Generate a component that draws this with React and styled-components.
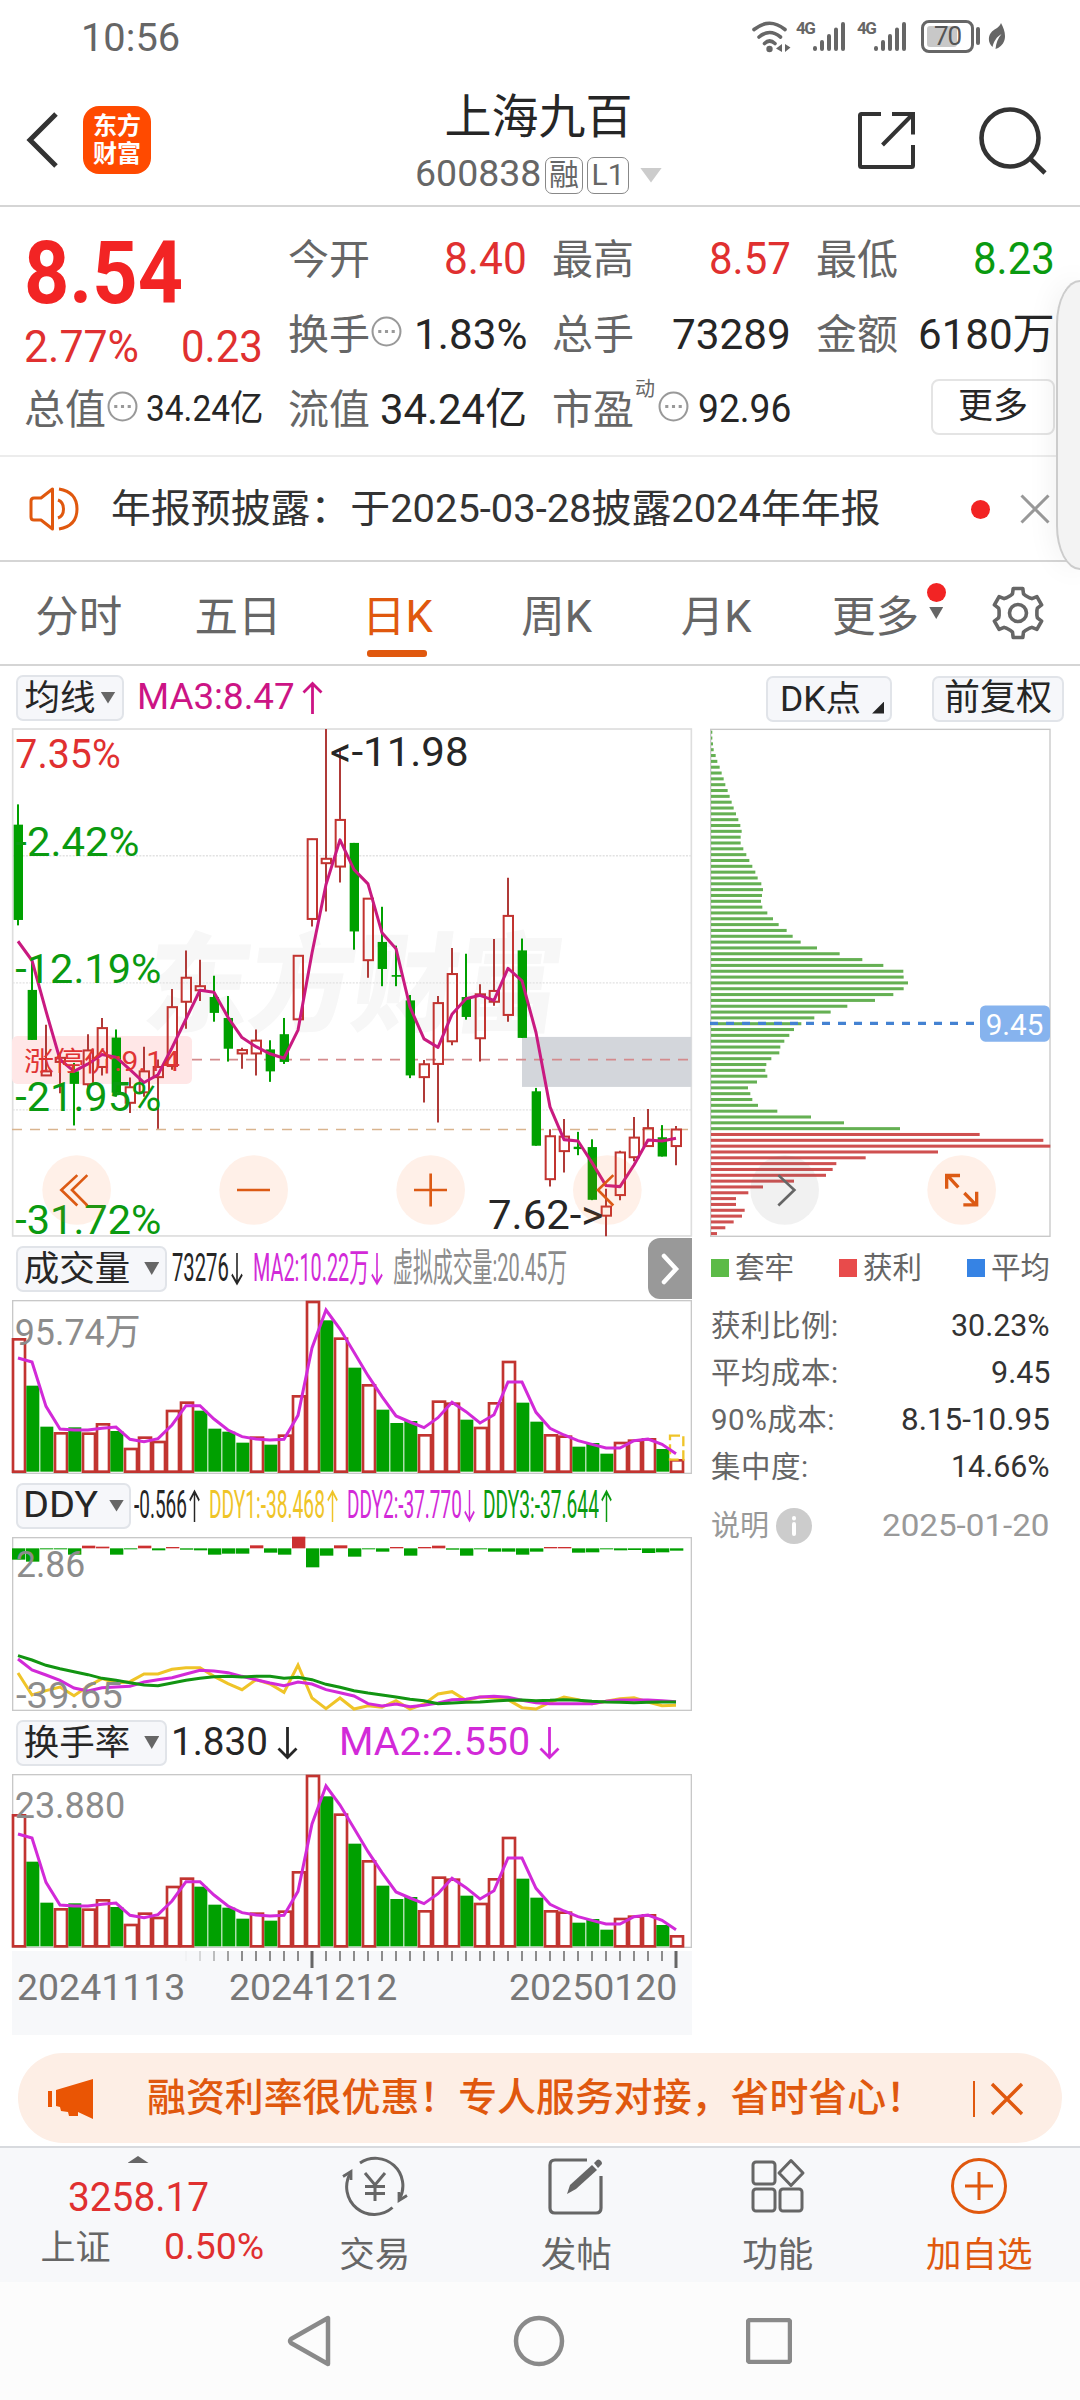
import { useLayoutEffect, useRef, useState } from 'react';
import styled, { createGlobalStyle } from 'styled-components';

const colors = {
  up: '#e03030',
  upStroke: '#c23430',
  down: '#00a000',
  downText: '#0a9a10',
  orange: '#e0580e',
  ma: '#cc1485',
  purple: '#d22ad8',
  yellow: '#efc428',
  text: '#262626',
  gray: '#666666',
  light: '#8c8c8c',
  line: '#d5d5d5',
};

const font = 'Roboto, "Noto Sans CJK SC", sans-serif';

const GlobalStyle = createGlobalStyle`
  * { box-sizing: border-box; }
  body { margin: 0; background: #fff; }
  svg { display: block; }
`;

/* ---------- data ---------- */

// [high, bodyTop, bodyBottom, low, rising]
const candles = [
  [250, 310, 592, 608, 0], [712, 799, 947, 947, 0], [902, 1040, 1052, 1052, 1], [985, 1000, 1012, 1105, 1],
  [1015, 1040, 1077, 1200, 0], [930, 978, 1078, 1103, 1], [882, 912, 1027, 1052, 1], [916, 940, 1103, 1115, 0],
  [1058, 1087, 1133, 1163, 1], [967, 1040, 1102, 1115, 1], [1005, 1027, 1057, 1210, 1], [796, 850, 1024, 1035, 1],
  [682, 763, 834, 914, 1], [710, 788, 800, 832, 1], [757, 820, 867, 893, 0], [817, 882, 973, 1011, 0],
  [970, 977, 987, 1032, 1], [916, 949, 987, 1052, 1], [948, 975, 1040, 1071, 0], [882, 930, 1012, 1018, 0],
  [697, 698, 886, 886, 1], [352, 353, 589, 611, 1], [27, 411, 424, 567, 1], [85, 296, 434, 481, 1],
  [364, 364, 626, 680, 0], [528, 529, 711, 763, 1], [553, 657, 737, 788, 0], [668, 755, 760, 788, 0],
  [814, 830, 1052, 1060, 0], [1006, 1019, 1057, 1132, 1], [817, 838, 1018, 1191, 1], [675, 752, 951, 963, 1],
  [692, 820, 879, 887, 0], [782, 812, 942, 1011, 1], [648, 802, 834, 846, 1], [467, 580, 873, 893, 1],
  [647, 682, 941, 941, 0], [1089, 1099, 1260, 1260, 0], [1211, 1232, 1359, 1381, 1], [1181, 1233, 1276, 1339, 1],
  [1219, 1263, 1270, 1288, 0], [1241, 1264, 1420, 1421, 0], [1387, 1440, 1467, 1528, 1], [1275, 1280, 1406, 1421, 1],
  [1175, 1236, 1294, 1306, 1], [1151, 1208, 1261, 1261, 1], [1199, 1235, 1292, 1292, 0], [1202, 1212, 1261, 1318, 1],
];

const ma3 = [
  655, 712, 862, 1005, 1040, 1018, 990, 998, 1035, 1073, 1050, 970, 885, 800, 806, 880, 940, 967, 988, 1001, 918, 690, 487, 355,
  443, 485, 630, 677, 850, 944, 969, 871, 825, 815, 830, 735, 772, 925, 1145, 1242, 1246, 1310, 1378, 1381, 1317, 1243, 1246, 1238,
];

const volume = [
  [114, 1], [257, 0], [380, 0], [396, 1], [382, 0], [397, 1], [369, 1], [393, 0], [443, 1], [409, 1], [422, 1], [329, 1],
  [304, 1], [332, 0], [386, 0], [395, 0], [428, 0], [409, 1], [434, 0], [403, 1], [285, 1], [2, 1], [61, 0], [112, 1],
  [203, 0], [252, 1], [329, 0], [369, 0], [363, 0], [402, 1], [301, 1], [307, 1], [359, 0], [380, 1], [306, 1], [182, 1],
  [308, 0], [365, 0], [402, 1], [406, 1], [440, 0], [429, 0], [461, 0], [425, 1], [418, 1], [414, 1], [447, 0], [477, 1],
];

const volumeMa = [
  174, 186, 319, 387, 390, 390, 385, 381, 418, 425, 416, 375, 317, 317, 357, 390, 410, 417, 420, 418, 346, 144, 30, 87,
  157, 227, 290, 348, 366, 383, 353, 307, 335, 369, 344, 246, 246, 337, 385, 405, 422, 433, 444, 444, 422, 417, 433, 461,
];

const ddyBars = [
  34, 40, 3, 3, 19, -8, -5, 19, 3, -8, 6, -4, 4, 6, 19, 16, 16, -9, 13, 19, -35, 57, 22, -9,
  25, 3, 10, -4, 22, -4, -8, 4, 22, 3, 10, 10, 19, 10, -4, -4, 13, 12, 3, 6, 5, 14, 12, 7,
];

const ddy1 = [
  408, 474, 461, 450, 476, 448, 425, 438, 434, 411, 411, 397, 392, 392, 418, 440, 458, 428, 441, 466, 384, 483, 515, 483,
  516, 506, 511, 491, 516, 501, 471, 464, 490, 480, 482, 488, 512, 516, 496, 480, 488, 500, 493, 485, 482, 495, 506, 505,
];
const ddy2 = [
  366, 399, 414, 430, 453, 462, 452, 450, 448, 435, 428, 422, 411, 400, 402, 407, 418, 428, 438, 446, 435, 441, 458, 467,
  477, 500, 507, 501, 509, 505, 498, 488, 487, 480, 478, 481, 490, 497, 500, 500, 500, 500, 493, 489, 489, 489, 491, 494,
];
const ddy3 = [
  356, 369, 385, 395, 404, 413, 424, 430, 437, 444, 446, 438, 430, 424, 419, 418, 420, 418, 418, 424, 421, 428, 442, 451,
  461, 468, 474, 480, 487, 491, 500, 498, 496, 495, 492, 490, 489, 491, 490, 488, 490, 493, 495, 496, 497, 496, 495, 495,
];

const chips = [
  4, 4, 6, 8, 14, 19, 26, 32, 38, 43, 50, 56, 62, 68, 75, 82, 88, 92, 89, 89, 97, 106, 115, 124, 133, 140, 151, 156, 153,
  150, 154, 169, 186, 203, 227, 245, 269, 318, 386, 454, 517, 577, 578, 591, 578, 547, 492, 409, 359, 310, 271, 249, 235,
  220, 208, 205, 181, 166, 163, 169, 138, 111, 118, 124, 141, 199, 300, 399, 567, 806, 997, 1018, 681, 464, 376, 365, 345,
  249, 156, 112, 75, 75, 101, 93, 68, 43, 18,
];
const firstProfitChip = 69;

const toPoints = (values, x0) => values.map((v, i) => `${x0 + i * 42},${v}`).join(' ');

/* ---------- shared ---------- */

// Squeezes or stretches one line of text to the given width
function FitText({ width, size, color, weight, children }) {
  const ref = useRef(null);
  const [scale, setScale] = useState(1);

  useLayoutEffect(() => {
    setScale(width / ref.current.offsetWidth);
  }, [width, size, children]);

  return (
    <FitBox $width={width} $size={size} $color={color} $weight={weight}>
      <FitInner ref={ref} style={{ transform: `scaleX(${scale})` }}>{children}</FitInner>
    </FitBox>
  );
}

const FitBox = styled.span`
  display: block;
  flex: none;
  width: ${props => props.$width}px;
  font-size: ${props => props.$size}px;
  font-weight: ${props => props.$weight || 400};
  color: ${props => props.$color || colors.text};
  line-height: 1.2;
  white-space: nowrap;
`;

const FitInner = styled.span`
  display: inline-block;
  transform-origin: 0 50%;
`;

const Space = styled.span`
  flex: none;
  width: ${props => props.$w}px;
`;

const Triangle = styled.span`
  flex: none;
  width: ${props => props.$w}px;
  height: ${props => props.$h}px;
  background: ${props => props.$color || colors.gray};
  clip-path: ${props => (props.$up ? 'polygon(50% 0, 100% 100%, 0 100%)' : 'polygon(0 0, 100% 0, 50% 100%)')};
`;

/* ---------- status bar and header ---------- */

function Signal() {
  return (
    <SignalGroup>
      <NetLabel>4G</NetLabel>
      <svg width="34" height="32" viewBox="0 0 34 32" stroke="#666" strokeWidth="4" strokeLinecap="round">
        <path d="M3 28v1M10 22v7M17 16v13M24 9.500v19.500M31 4v25" />
      </svg>
    </SignalGroup>
  );
}

function StatusBar() {
  return (
    <Status>
      <FitText width={99} size={39} color="#666">10:56</FitText>
      <StatusIcons>
        <svg width="40" height="34" viewBox="0 0 40 34" fill="none" stroke="#666" strokeWidth="3.600" strokeLinecap="round">
          <path d="M3 10.500Q18.500 -2 34 10.500M8 18Q18.500 9 29.500 18M13.500 24.500Q18.500 19.500 24 24.500" />
          <circle cx="18.500" cy="30" r="3.200" fill="#666" stroke="none" />
          <path d="M31 25v8l-6-3.500zM34 25v8l5.500-4.500z" fill="#666" stroke="none" />
        </svg>
        <Space $w={5} />
        <Signal />
        <Space $w={11} />
        <Signal />
        <Space $w={14} />
        <Battery><BatteryLevel>70</BatteryLevel></Battery>
        <BatteryTip />
        <svg width="18" height="28" viewBox="0 0 18 28" fill="#666">
          <path d="M13 1c3 6 5 11 3.500 17C15 23 11 26 7.500 27c.500-6 2.500-11 6-15C8.500 15 6 19 4.500 25 0 21-.500 14 4 9.500 7.500 6.500 11 6 13 1z" />
        </svg>
      </StatusIcons>
    </Status>
  );
}

function Header() {
  return (
    <HeaderBar>
      <svg width="34" height="58" viewBox="0 0 34 58" fill="none" stroke="#333" strokeWidth="5">
        <path d="M31 3L5 29l26 26" />
      </svg>
      <Logo><span>东方</span><span>财富</span></Logo>
      <TitleBlock>
        <Title>上海九百</Title>
        <CodeRow>
          <FitText width={126} size={36} color="#666">600838</FitText>
          <Space $w={4} />
          <Badge $w={38}>融</Badge>
          <Space $w={4} />
          <Badge $w={42}>L1</Badge>
          <Space $w={11} />
          <Triangle $w={22} $h={15} $color="#ccc" />
        </CodeRow>
      </TitleBlock>
      <svg width="60" height="60" viewBox="0 0 60 60" fill="none" stroke="#333" strokeWidth="4">
        <path d="M25 4H5.500Q4 4 4 5.500V55.500Q4 57 5.500 57H55.500Q57 57 57 55.500V35M36 4H57V24.500M56 5L26.500 35" />
      </svg>
      <Space $w={61} />
      <svg width="72" height="72" viewBox="0 0 72 72" fill="none" stroke="#333" strokeWidth="4.600">
        <circle cx="33" cy="34" r="28.500" />
        <path d="M53 54.500L68 69" />
      </svg>
    </HeaderBar>
  );
}

const Status = styled.div`
  height: 92px;
  padding: 14px 74px 0 81px;
  display: flex;
  justify-content: space-between;
  align-items: flex-start;

  & > ${FitBox} {
    margin-top: 1px;
  }
`;

const StatusIcons = styled.div`
  display: flex;
  align-items: center;
  height: 44px;
`;

const SignalGroup = styled.div`
  display: flex;
  align-items: flex-start;
`;

const NetLabel = styled.span`
  width: 16px;
  font-size: 17px;
  line-height: 16px;
  font-weight: 700;
  letter-spacing: -1.5px;
  color: #666;
  white-space: nowrap;
`;

const Battery = styled.div`
  width: 53px;
  height: 33px;
  border: 3px solid #666;
  border-radius: 8px;
  padding: 3px;
`;

const BatteryLevel = styled.div`
  width: 30px;
  height: 21px;
  padding-left: 7px;
  background: #c8c8c8;
  border-radius: 3px;
  font-size: 26px;
  line-height: 21px;
  letter-spacing: -1px;
  color: #555;
  white-space: nowrap;
`;

const BatteryTip = styled.div`
  width: 4px;
  height: 18px;
  margin: 0 8px 0 2px;
  border-radius: 2px;
  background: #666;
`;

const HeaderBar = styled.div`
  height: 115px;
  display: flex;
  align-items: center;
  padding: 2px 31px 20px 25px;
  border-bottom: 2px solid ${colors.line};
`;

const Logo = styled.div`
  width: 68px;
  height: 68px;
  margin-left: 24px;
  display: flex;
  flex-direction: column;
  justify-content: center;
  align-items: center;
  border-radius: 16px;
  background: #ff4a00;
  color: #fff;
  font-size: 24px;
  font-weight: 700;
  line-height: 28px;
`;

const TitleBlock = styled.div`
  flex: 1;
  padding-top: 7px;
  display: flex;
  flex-direction: column;
  align-items: center;
`;

const Title = styled.div`
  margin-right: -70px;
  font-size: 47px;
  line-height: 56px;
  color: ${colors.text};
`;

const CodeRow = styled.div`
  display: flex;
  align-items: center;
  height: 44px;
  margin: 8px -70px 0 0;
`;

const Badge = styled.span`
  width: ${props => props.$w}px;
  height: 37px;
  border: 1.5px solid #888;
  border-radius: 7px;
  font-size: 30px;
  line-height: 34px;
  text-align: center;
  color: #666;
`;

/* ---------- quote ---------- */

function Dots() {
  return (
    <DotsSvg width="31" height="31" viewBox="0 0 30 30" fill="none" stroke="#999" strokeWidth="2">
      <circle cx="15" cy="15" r="13.500" />
      <path d="M7 15h3M13.500 15h3M20 15h3" strokeWidth="3" />
    </DotsSvg>
  );
}

function QuotePanel() {
  return (
    <Quote>
      <PriceCell>
        <Price><FitText width={159} size={88} color="#f22424" weight={700}>8.54</FitText></Price>
        <Change>
          <FitText width={115} size={44} color={colors.up}>2.77%</FitText>
          <FitText width={82} size={44} color={colors.up}>0.23</FitText>
        </Change>
      </PriceCell>
      <Cell><Label>今开</Label><FitText width={83} size={44} color={colors.up}>8.40</FitText></Cell>
      <Cell><Label>最高</Label><FitText width={82} size={44} color={colors.up}>8.57</FitText></Cell>
      <Cell><Label>最低</Label><FitText width={82} size={44} color={colors.downText}>8.23</FitText></Cell>
      <Cell><Label>换手</Label><Dots /><FitText width={113} size={43}>1.83%</FitText></Cell>
      <Cell><Label>总手</Label><FitText width={119} size={43}>73289</FitText></Cell>
      <Cell><Label>金额</Label><FitText width={137} size={43}>6180万</FitText></Cell>
      <Cell><Label>总值</Label><Dots /><FitText width={117} size={36}>34.24亿</FitText></Cell>
      <Cell><Label>流值</Label><FitText width={147} size={43}>34.24亿</FitText></Cell>
      <Cell><Label>市盈</Label><Super>动</Super><Dots /><FitText width={93} size={38}>92.96</FitText></Cell>
      <Cell><span /><MoreButton>更多</MoreButton></Cell>
      <SideHandle />
    </Quote>
  );
}

const DotsSvg = styled.svg`
  flex: none;
  margin: 0 auto 6px 1px;
`;

const Quote = styled.div`
  position: relative;
  display: grid;
  grid-template-columns: 239px 239px 239px 239px;
  grid-template-rows: 75px 75px 75px;
  column-gap: 25px;
  height: 250px;
  padding: 15px 0 0 24px;
  border-bottom: 2px solid #ececec;
`;

const PriceCell = styled.div`
  grid-row: span 2;
`;

const Price = styled.div`
  height: 101px;
  display: flex;
  align-items: center;
`;

const Change = styled.div`
  height: 49px;
  display: flex;
  justify-content: space-between;
  align-items: center;
`;

const Cell = styled.div`
  display: flex;
  justify-content: space-between;
  align-items: center;
`;

const Label = styled.span`
  font-size: 41px;
  line-height: 50px;
  color: ${colors.gray};
  white-space: nowrap;
`;

const Super = styled.span`
  align-self: flex-start;
  margin: 5px 2px 0 1px;
  font-size: 20px;
  line-height: 24px;
  color: ${colors.gray};
`;

const MoreButton = styled.button`
  width: 124px;
  height: 56px;
  margin-bottom: 6px;
  padding: 0;
  background: #fff;
  border: 2px solid #e4e4e4;
  border-radius: 8px;
  font: 35px/50px ${font};
  color: ${colors.text};
`;

// Edge handle of the floating drawer
const SideHandle = styled.div`
  position: absolute;
  left: 1056px;
  top: 73px;
  width: 24px;
  height: 290px;
  background: #f3f3f3;
  border: 2px solid #ccc;
  border-right: none;
  border-radius: 24px 0 0 24px / 44px 0 0 44px;
  box-shadow: 0 0 30px rgba(0, 0, 0, 0.08);
  z-index: 2;
`;

/* ---------- notice and tabs ---------- */

function Notice() {
  return (
    <NoticeBar>
      <svg width="52" height="46" viewBox="0 0 52 46" fill="none" stroke={colors.orange} strokeWidth="3">
        <path d="M23.500 3v40L12 34H5q-3 0-3-3V15q0-3 3-3h7z" strokeLinejoin="round" />
        <path d="M29 14q5.500 2 5.500 9t-5.500 9M30 3q18 3 18 20T30 43" />
      </svg>
      <Space $w={30} />
      <FitText width={770} size={39} color="#333">年报预披露：于2025-03-28披露2024年年报</FitText>
      <RedDot $left={90} />
      <Space $w={30} />
      <svg width="30" height="30" viewBox="0 0 30 30" stroke="#999" strokeWidth="3">
        <path d="M1.500 1.500l27 27M28.500 1.500l-27 27" />
      </svg>
    </NoticeBar>
  );
}

const gearPath = Array.from({ length: 6 }, (_, k) => {
  const at = (r, deg) => {
    const a = ((deg + k * 60 - 90) * Math.PI) / 180;
    return `${(27 + r * Math.cos(a)).toFixed(1)} ${(27 + r * Math.sin(a)).toFixed(1)}`;
  };
  return `${k ? 'L' : 'M'}${at(19, -23)}L${at(20, -16)}L${at(25, -11)}L${at(25, 11)}L${at(20, 16)}L${at(19, 23)}`;
}).join('') + 'Z';

function Tabs() {
  const tabs = ['分时', '五日', '日K', '周K', '月K'];
  return (
    <TabBar>
      {tabs.map(tab => (
        <Tab key={tab} $active={tab === '日K'}>{tab}</Tab>
      ))}
      <Tab>
        更多
        <MoreMark><RedDot /><Triangle $w={14} $h={12} /></MoreMark>
      </Tab>
      <GearCell>
        <svg width="54" height="54" viewBox="0 0 54 54" fill="none" stroke="#666" strokeWidth="3.600" strokeLinejoin="round">
          <path d={gearPath} />
          <circle cx="27" cy="27" r="8.500" />
        </svg>
      </GearCell>
    </TabBar>
  );
}

const NoticeBar = styled.div`
  height: 105px;
  display: flex;
  align-items: center;
  padding: 1px 0 0 29px;
  border-bottom: 2px solid ${colors.line};
`;

const RedDot = styled.span`
  flex: none;
  width: 19px;
  height: 19px;
  margin-left: ${props => props.$left || 0}px;
  border-radius: 50%;
  background: #f22424;
`;

const TabBar = styled.div`
  display: flex;
  height: 104px;
  padding-bottom: 1px;
  border-bottom: 2px solid ${colors.line};
`;

const Tab = styled.div`
  position: relative;
  width: 159.4px;
  display: flex;
  justify-content: center;
  align-items: center;
  padding: 2px 2px 0 0;
  font-size: 43.5px;
  color: ${props => (props.$active ? colors.orange : colors.gray)};

  &::after {
    content: '';
    display: ${props => (props.$active ? 'block' : 'none')};
    position: absolute;
    left: 50%;
    bottom: 6px;
    width: 60px;
    height: 7px;
    margin-left: -31px;
    border-radius: 3px;
    background: ${colors.orange};
  }
`;

const MoreMark = styled.span`
  position: absolute;
  left: 130px;
  top: 21px;
  display: flex;
  flex-direction: column;
  align-items: center;
  gap: 5px;
`;

const GearCell = styled.div`
  width: 124px;
  display: flex;
  justify-content: center;
  align-items: center;
`;

/* ---------- charts ---------- */

function RoundButton({ x, gray, children }) {
  return (
    <g transform={`translate(${x} 1391)`} fill="none" stroke={gray ? '#666' : '#dc5a14'} strokeWidth="8">
      <circle r="103" fill={gray ? 'rgba(120,120,120,0.1)' : 'rgba(255,110,30,0.1)'} stroke="none" />
      {children}
    </g>
  );
}

function ChartLabel({ x, y, length, color, size = 118, children }) {
  return (
    <text x={x} y={y} textLength={length} lengthAdjust="spacingAndGlyphs" fontSize={size} fill={color}>
      {children}
    </text>
  );
}

function CandleChart() {
  return (
    <PriceSvg $w={680} viewBox="36 24 2040 1512" preserveAspectRatio="none" fontFamily={font}>
      <text x="440" y="898" fontSize="318" fontWeight="900" fill="#f7f7f7" textLength="1250" transform="skewX(-8) translate(108 0)">
        东方财富
      </text>
      <rect x="38" y="27" width="2036" height="1500" fill="none" stroke="#dedede" strokeWidth="5" />
      {[402, 778, 1154].map(y => (
        <path key={y} d={`M38 ${y}H2074`} stroke="#e2e2e2" strokeWidth="4" strokeDasharray="6 4" />
      ))}
      <rect x="1566" y="938" width="508" height="148" fill="#d3d6db" />
      <rect x="36" y="935" width="540" height="142" rx="16" fill="#ffe7e7" />
      <path d="M576 1005H2074" stroke="#d48a8c" strokeWidth="5" strokeDasharray="30 24" />
      <path d="M36 1212H2074" stroke="#d9b48e" strokeWidth="5" strokeDasharray="30 24" />

      {candles.map(([high, top, bottom, low, rising], i) => {
        const x = 54 + i * 42;
        return rising ? (
          <g key={i} stroke={colors.upStroke} strokeWidth="6" fill="none">
            <path d={`M${x} ${high}V${top}M${x} ${bottom}V${low}`} stroke="#b03a38" />
            <rect x={x - 13} y={top} width="28" height={bottom - top} />
          </g>
        ) : (
          <g key={i} fill={colors.down}>
            <rect x={x - 3} y={high} width="6" height={low - high} />
            <rect x={x - 13} y={top} width="28" height={bottom - top} />
          </g>
        );
      })}
      <polyline points={toPoints(ma3, 54)} fill="none" stroke="#c91a80" strokeWidth="9" strokeLinejoin="round" />

      <ChartLabel x={72} y={1038} length={468} size={82} color="#e03434">涨停价:9.14</ChartLabel>
      <ChartLabel x={46} y={143} length={316} color={colors.up}>7.35%</ChartLabel>
      <ChartLabel x={46} y={404} length={372} color={colors.downText}>-2.42%</ChartLabel>
      <ChartLabel x={46} y={780} length={438} color={colors.downText}>-12.19%</ChartLabel>
      <ChartLabel x={46} y={1157} length={438} color={colors.downText}>-21.95%</ChartLabel>
      <ChartLabel x={46} y={1521} length={438} color={colors.downText}>-31.72%</ChartLabel>
      <ChartLabel x={990} y={136} length={416} color={colors.text}>&lt;-11.98</ChartLabel>
      <ChartLabel x={1464} y={1505} length={346} color={colors.text}>7.62-&gt;</ChartLabel>

      <RoundButton x={230}><path d="M2 -44L-46 0L2 46M32 -44L-14 0L32 46" /></RoundButton>
      <RoundButton x={761}><path d="M-50 0H49" /></RoundButton>
      <RoundButton x={1292}><path d="M-50 0H49M0 -49V49" /></RoundButton>
      <RoundButton x={1822}><path d="M18 -44L-28 0L18 46" /></RoundButton>
    </PriceSvg>
  );
}

function ChipChart() {
  return (
    <PriceSvg $w={341} viewBox="60 24 1023 1512" preserveAspectRatio="none" fontFamily={font}>
      <rect x="62" y="28" width="1018" height="1500" fill="none" stroke="#c8c8c8" strokeWidth="4" />
      {chips.map((w, i) => (
        <rect
          key={i}
          x="63"
          y={32 + i * 17.25}
          width={w}
          height="9"
          fill={i < firstProfitChip ? '#65b053' : '#cf5050'}
        />
      ))}
      <path d="M60 898H852" stroke="#4482d2" strokeWidth="9" strokeDasharray="24 24" />
      <rect x="870" y="845" width="210" height="107" rx="16" fill="#86b3ee" />
      <ChartLabel x={887} y={932} length={173} size={88} color="#fff">9.45</ChartLabel>
      <RoundButton x={284} gray><path d="M-19 -44L29 0L-19 46" /></RoundButton>
      <RoundButton x={815}>
        <path d="M-5 -43H-45V-4M-43 -43L-10 -8M5 44H45V5M43 44L8 9" strokeWidth="10" />
      </RoundButton>
    </PriceSvg>
  );
}

function BarPanel({ offset, label, labelLength, virtual }) {
  const floor = offset ? 517 : 515;
  return (
    <PanelSvg viewBox="0 0 2040 522" fontFamily={font}>
      <rect x="2" y="2" width="2036" height="518" fill="none" stroke="#c8c8c8" strokeWidth="4" />
      {volume.map(([top, rising], i) => {
        const y = top + (i === 21 ? 0 : offset);
        return rising ? (
          <rect key={i} x={i * 42 + 3} y={y + 4} width="36" height={floor - y - 4} fill="#fff" stroke={colors.upStroke} strokeWidth="8" />
        ) : (
          <rect key={i} x={i * 42 + 1} y={y} width="39" height={floor - y} fill={colors.down} />
        );
      })}
      {virtual && (
        <rect x="1974" y="407" width="40" height="72" fill="none" stroke={colors.yellow} strokeWidth="7" strokeDasharray="30 12" />
      )}
      <polyline points={toPoints(volumeMa.map(v => v + offset), 18)} fill="none" stroke={colors.purple} strokeWidth="9" />
      <ChartLabel x={8} y={offset ? 133 : 134} length={labelLength} size={112} color={colors.light}>{label}</ChartLabel>
    </PanelSvg>
  );
}

function DdyPanel() {
  return (
    <PanelSvg viewBox="0 0 2040 522" fontFamily={font}>
      <rect x="2" y="2" width="2036" height="518" fill="none" stroke="#c8c8c8" strokeWidth="4" />
      {ddyBars.map((h, i) => (
        <rect key={i} x={i * 42} y={Math.min(34, 34 + h)} width="40" height={Math.abs(h)} fill={h > 0 ? colors.down : '#cc3030'} />
      ))}
      <ChartLabel x={12} y={119} length={208} size={112} color={colors.light}>2.86</ChartLabel>
      <g fill="none" strokeWidth="9">
        <polyline points={toPoints(ddy1, 18)} stroke={colors.yellow} />
        <polyline points={toPoints(ddy2, 18)} stroke={colors.purple} />
        <polyline points={toPoints(ddy3, 18)} stroke="#129412" />
      </g>
      <ChartLabel x={12} y={514} length={320} size={112} color={colors.light}>-39.65</ChartLabel>
    </PanelSvg>
  );
}

function DateAxis() {
  return (
    <Axis>
      <svg width="680" height="18" viewBox="0 0 680 18">
        {Array.from({ length: 36 }, (_, k) => {
          const i = k + 12;
          const major = i === 21 || i === 47;
          return (
            <rect
              key={i}
              x={6 + i * 14 - (major ? 1.5 : 1)}
              y="0"
              width={major ? 3 : 2}
              height={major ? 17 : 10}
              fill={major ? '#666' : '#8c8c8c'}
              opacity={Math.min(1, (k + 0.2) / 4)}
            />
          );
        })}
      </svg>
      <Dates>
        <FitText width={168} size={37} color="#777">20241113</FitText>
        <Space $w={44} />
        <FitText width={168} size={37} color="#777">20241212</FitText>
        <Space $w={112} />
        <FitText width={168} size={37} color="#777">20250120</FitText>
      </Dates>
    </Axis>
  );
}

function Toolbar() {
  return (
    <Tools>
      <Chip $w={108}>均线<Triangle $w={15} $h={12} /></Chip>
      <Space $w={13} />
      <FitText width={158} size={37} color={colors.ma}>MA3:8.47</FitText>
      <Arrow color={colors.ma} left={7} />
      <ToolButtons>
        <Chip $w={126}>DK点<Corner /></Chip>
        <Chip $w={132}><FitText width={108} size={36}>前复权</FitText></Chip>
      </ToolButtons>
    </Tools>
  );
}

function Arrow({ color, down, w = 21, left = 2 }) {
  return (
    <ArrowSvg $left={left} width={w} height="34" viewBox="0 0 21 34" preserveAspectRatio="none" fill="none" stroke={color} strokeWidth="2.800">
      <path d={down ? 'M10.500 1v31M1.500 22.500l9 9 9-9' : 'M10.500 33V2M1.500 11.500l9-9 9 9'} />
    </ArrowSvg>
  );
}

function Indicator({ width, size = 39, color, down, arrow, children }) {
  return (
    <>
      <FitText width={width} size={size} color={color}>{children}</FitText>
      {arrow && <Arrow color={color} down={down} w={arrow} left={arrow > 15 ? 9 : 2} />}
    </>
  );
}

const costRows = [
  ['获利比例:', '30.23%', 99],
  ['平均成本:', '9.45', 59],
  ['90%成本:', '8.15-10.95', 149],
  ['集中度:', '14.66%', 99],
];

function CostPanel() {
  return (
    <CostColumn>
      <ChipChart />
      <Legend>
        <LegendItem $color="#5cbb47">套牢</LegendItem>
        <LegendItem $color="#e84b4b">获利</LegendItem>
        <LegendItem $color="#3683e4">平均</LegendItem>
      </Legend>
      {costRows.map(([label, value, width]) => (
        <CostRow key={label}>
          <CostLabel>{label}</CostLabel>
          <FitText width={width} size={31} color="#333">{value}</FitText>
        </CostRow>
      ))}
      <NoteRow>
        <span>说明</span>
        <InfoMark>
          <svg width="36" height="36" viewBox="0 0 36 36" fill="none" stroke="#fff" strokeWidth="4" strokeLinecap="round">
            <path d="M18 16v10M18 10v.500" />
          </svg>
        </InfoMark>
        <FitText width={168} size={31} color="#999">2025-01-20</FitText>
      </NoteRow>
    </CostColumn>
  );
}

function Charts() {
  return (
    <ChartArea>
      <ChartColumn>
        <CandleChart />
        <PanelHead $h={61} $bottom={2}>
          <Chip $w={151}>成交量<Space $w={4} /><Triangle $w={15} $h={13} /></Chip>
          <Space $w={5} />
          <Indicator width={57} color={colors.text} down arrow={12}>73276</Indicator>
          <Space $w={10} />
          <Indicator width={116} color={colors.purple} down arrow={12}>MA2:10.22万</Indicator>
          <Space $w={10} />
          <Indicator width={174} color={colors.light}>虚拟成交量:20.45万</Indicator>
          <NextTab>
            <svg width="20" height="42" viewBox="0 0 20 42" fill="none" stroke="#fff" strokeWidth="4.500" strokeLinecap="round">
              <path d="M4 8l12 13L4 34" />
            </svg>
          </NextTab>
        </PanelHead>
        <BarPanel offset={0} label="95.74万" labelLength={378} virtual />
        <PanelHead $h={63}>
          <Chip $w={115}><FitText width={75} size={36}>DDY</FitText><Space $w={1} /><Triangle $w={15} $h={12} /></Chip>
          <Space $w={3} />
          <Indicator width={53} color={colors.text} arrow={11}>-0.566</Indicator>
          <Space $w={9} />
          <Indicator width={116} color={colors.yellow} arrow={11}>DDY1:-38.468</Indicator>
          <Space $w={9} />
          <Indicator width={115} color={colors.purple} down arrow={11}>DDY2:-37.770</Indicator>
          <Space $w={8} />
          <Indicator width={116} color={colors.downText} arrow={11}>DDY3:-37.644</Indicator>
        </PanelHead>
        <DdyPanel />
        <PanelHead $h={63}>
          <Chip $w={151}>换手率<Space $w={4} /><Triangle $w={15} $h={13} /></Chip>
          <Space $w={4} />
          <Indicator width={97} color={colors.text} down arrow={21}>1.830</Indicator>
          <Space $w={41} />
          <Indicator width={191} color={colors.purple} down arrow={21}>MA2:2.550</Indicator>
        </PanelHead>
        <BarPanel offset={6} label="23.880" labelLength={332} />
        <DateAxis />
      </ChartColumn>
      <CostPanel />
    </ChartArea>
  );
}

const Tools = styled.div`
  height: 62px;
  display: flex;
  align-items: center;
  padding: 1px 0 0 16px;
`;

const ToolButtons = styled.div`
  display: flex;
  gap: 40px;
  margin: 2px 16px 0 auto;
`;

const Chip = styled.div`
  flex: none;
  width: ${props => props.$w}px;
  height: 46px;
  display: flex;
  justify-content: center;
  align-items: center;
  gap: 5px;
  background: #f6f7fa;
  border: 2px solid #e1e4e9;
  border-radius: 7px;
  font-size: 35.5px;
  line-height: 42px;
  color: ${colors.text};
  white-space: nowrap;
`;

const Corner = styled.span`
  width: 12px;
  height: 12px;
  margin: 18px -6px 0 6px;
  background: ${colors.text};
  clip-path: polygon(100% 0, 100% 100%, 0 100%);
`;

const ArrowSvg = styled.svg`
  flex: none;
  margin-left: ${props => props.$left}px;
`;

const ChartArea = styled.div`
  display: flex;
  height: 1325px;
  padding-left: 12px;
`;

const ChartColumn = styled.div`
  width: 680px;
`;

const PriceSvg = styled.svg`
  width: ${props => props.$w}px;
  height: 511px;
  overflow: visible;
`;

const PanelHead = styled.div`
  height: ${props => props.$h}px;
  display: flex;
  align-items: center;
  padding-bottom: ${props => props.$bottom || 0}px;
  padding-left: 4px;
`;

const NextTab = styled.div`
  display: flex;
  justify-content: center;
  align-items: center;
  width: 44px;
  height: 61px;
  margin-left: auto;
  border-radius: 12px 0 0 12px;
  background: #999;
`;

const PanelSvg = styled.svg`
  width: 680px;
  height: 174px;
  overflow: visible;
`;

const Axis = styled.div`
  height: 84px;
  margin-top: 3px;
  background: #f7f8fa;
`;

const Dates = styled.div`
  display: flex;
  align-items: center;
  height: 38px;
  padding-left: 5px;
`;

const CostColumn = styled.div`
  width: 341px;
  margin-left: 18px;
`;

const Legend = styled.div`
  display: flex;
  justify-content: space-between;
  height: 63px;
  padding: 0 1px 6px;
`;

const LegendItem = styled.div`
  display: flex;
  align-items: center;
  gap: 6px;
  font-size: 29.5px;
  line-height: 36px;
  color: ${colors.gray};

  &::before {
    content: '';
    width: 18px;
    height: 18px;
    background: ${props => props.$color};
  }
`;

const CostRow = styled.div`
  display: flex;
  justify-content: space-between;
  align-items: center;
  height: 47px;
  padding: 0 1px;
  color: ${colors.gray};
`;

const CostLabel = styled.span`
  font-size: 29.5px;
  line-height: 36px;
  letter-spacing: 0.5px;

  &::first-line {
    color: ${colors.gray};
  }
`;

const NoteRow = styled.div`
  display: flex;
  align-items: center;
  height: 72px;
  padding: 0 1px;
  font-size: 29px;
  line-height: 36px;
  color: #999;
`;

const InfoMark = styled.span`
  width: 36px;
  height: 36px;
  margin: 0 auto 0 7px;
  border-radius: 50%;
  background: #ccc;
`;

/* ---------- banner and bottom bars ---------- */

function Banner() {
  return (
    <BannerBox>
      <svg width="46" height="40" viewBox="0 0 46 40" fill="#ea5504">
        <path d="M0 12h4v16H0zM8 11L45 0v40L30 33v4h-9l-1-4-7-1-1-4-4-1z" />
      </svg>
      <Space $w={53} />
      <FitText width={778} size={39} color={colors.orange} weight={500}>融资利率很优惠！专人服务对接，省时省心！</FitText>
      <Divider />
      <svg width="34" height="34" viewBox="0 0 34 34" stroke={colors.orange} strokeWidth="3.400">
        <path d="M2 2l30 30M32 2L2 32" />
      </svg>
    </BannerBox>
  );
}

function TradeIcon() {
  return (
    <svg width="66" height="60" viewBox="0 0 66 60" fill="none" stroke="#666" strokeWidth="3">
      <path d="M8.500 17A27.500 27.500 0 0 0 50.500 51.500M18 7A27.500 27.500 0 0 1 57.500 43" />
      <path d="M1 20.500L9 15.500V24M65 39.500L57 44.500V36" strokeWidth="2.800" />
      <path d="M23 17l10 12 10-12M33 29v16M23 30.500h20M23 37.500h20" />
    </svg>
  );
}

function PostIcon() {
  return (
    <svg width="60" height="60" viewBox="0 0 60 60" fill="none" stroke="#666" strokeWidth="3.200">
      <path d="M41 4H9Q4 4 4 9V52Q4 57 9 57H50Q55 57 55 52V20" />
      <path d="M21 38l3-9L46 9l5 5-21 19z" fill="#666" stroke="none" />
      <path d="M48 7l3-3q2-1.500 4 1t0 4l-3 3z" fill="#666" stroke="none" />
    </svg>
  );
}

function GridIcon() {
  return (
    <svg width="56" height="56" viewBox="0 0 56 56" fill="none" stroke="#666" strokeWidth="3" strokeLinejoin="round">
      <rect x="3" y="4" width="22" height="22" rx="3" />
      <rect x="3" y="31" width="22" height="22" rx="3" />
      <rect x="30" y="31" width="22" height="22" rx="3" />
      <path d="M41 2.500L53 15 41 27.500 29 15z" />
    </svg>
  );
}

function AddIcon() {
  return (
    <svg width="58" height="58" viewBox="0 0 58 58" fill="none" stroke={colors.orange} strokeWidth="3">
      <circle cx="29" cy="29" r="26.500" />
      <path d="M15 29h28M29 15v28" />
    </svg>
  );
}

function BottomNav() {
  return (
    <Nav>
      <IndexCell>
        <Triangle $up $w={21} $h={7} />
        <FitText width={141} size={41} color={colors.up}>3258.17</FitText>
        <IndexRow>
          <span>上证</span>
          <FitText width={100} size={37} color={colors.up}>0.50%</FitText>
        </IndexRow>
      </IndexCell>
      <NavItem><TradeIcon />交易</NavItem>
      <NavItem><PostIcon />发帖</NavItem>
      <NavItem><GridIcon />功能</NavItem>
      <NavItem $active><AddIcon />加自选</NavItem>
    </Nav>
  );
}

function SystemBar() {
  return (
    <System>
      <svg width="46" height="54" viewBox="0 0 46 54"><path d="M42 4v46L5 29q-2-2 0-4z" strokeLinejoin="round" /></svg>
      <svg width="52" height="52" viewBox="0 0 52 52"><circle cx="26" cy="26" r="23" /></svg>
      <svg width="46" height="46" viewBox="0 0 46 46"><rect x="2" y="2" width="42" height="42" rx="2" /></svg>
    </System>
  );
}

const BannerBox = styled.div`
  display: flex;
  align-items: center;
  height: 90px;
  margin: 0 18px 3px;
  padding: 1px 0 0 30px;
  border-radius: 45px;
  background: #fdeee5;
`;

const Divider = styled.span`
  width: 2px;
  height: 36px;
  margin: 0 15px 0 48px;
  background: ${colors.orange};
`;

const Nav = styled.div`
  display: flex;
  height: 136px;
  background: #f7f8fa;
  border-top: 2px solid #d8dade;
`;

const IndexCell = styled.div`
  width: 276px;
  margin-right: -2px;
  display: flex;
  flex-direction: column;
  align-items: center;
  padding-top: 8px;

  & > ${FitBox} {
    margin-top: 10px;
  }
`;

const IndexRow = styled.div`
  width: 223px;
  margin: 2px 0 0 28px;
  display: flex;
  justify-content: space-between;
  align-items: center;
  font-size: 35px;
  line-height: 44px;
  color: ${colors.gray};

  & > span:first-child {
    padding-top: 3px;
  }
`;

const NavItem = styled.div`
  width: 201.5px;
  display: flex;
  flex-direction: column;
  align-items: center;
  font-size: 35.5px;
  line-height: 42px;
  color: ${props => (props.$active ? colors.orange : colors.gray)};

  svg {
    height: 60px;
    margin: 8px 0 18px;
  }
`;

const System = styled.div`
  flex: 1;
  display: flex;
  justify-content: center;
  align-items: center;
  gap: 181px;
  padding-right: 2px;
  background: #fcfcfc;

  svg {
    fill: none;
    stroke: #8a8a8a;
    stroke-width: 4.5;
  }
`;

const Page = styled.div`
  width: 1080px;
  height: 2400px;
  display: flex;
  flex-direction: column;
  overflow: hidden;
  background: #fff;
  font-family: ${font};
  color: ${colors.text};
`;

export default function App() {
  return (
    <Page>
      <GlobalStyle />
      <StatusBar />
      <Header />
      <QuotePanel />
      <Notice />
      <Tabs />
      <Toolbar />
      <Charts />
      <Banner />
      <BottomNav />
      <SystemBar />
    </Page>
  );
}
